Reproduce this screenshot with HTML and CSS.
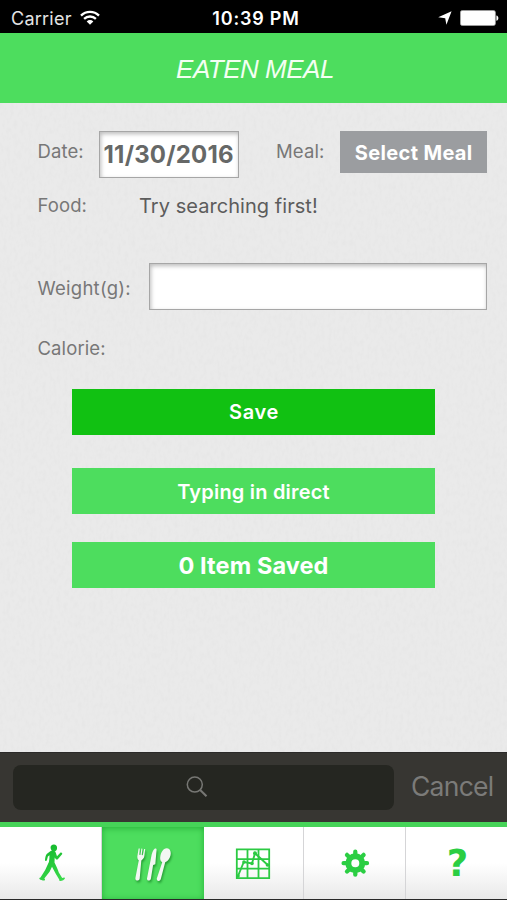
FILE: index.html
```
<!DOCTYPE html>
<html lang="en">
<head>
<meta charset="utf-8">
<title>Eaten Meal</title>
<link rel="stylesheet" href="styles.css">
</head>
<body>
<div class="app">
  <div class="status">
    <div class="carrier"><span>Carrier</span>
      <svg width="20" height="16" viewBox="0 0 20 16" fill="none" stroke="#fff" stroke-width="2.3"><path d="M1 5.6C6 .6 14 .6 19 5.6M4.1 8.9c3.3-3.2 8.5-3.2 11.8 0"/><path d="M6.7 11.4c1.9-1.8 4.7-1.8 6.6 0L10 14.7z" fill="#fff" stroke="none"/></svg>
    </div>
    <div class="clock">10:39 PM</div>
    <div class="power">
      <svg class="arrow" width="14" height="14" viewBox="0 0 14 14"><path d="M13.6.2 8.4 13.8 7.2 7.2.2 6.2z" fill="#fff"/></svg>
      <svg width="39" height="16" viewBox="0 0 39 16"><rect x=".4" y=".4" width="35" height="15.2" rx="2" fill="#fff" stroke="#aaa" stroke-width=".7"/><path d="M36.4 5.4c2.6.5 2.6 4.8 0 5.3z" fill="#fff"/></svg>
    </div>
  </div>
  <header class="title"><h1>EATEN MEAL</h1></header>
  <main class="form">
    <svg class="paper" width="507" height="649"><filter id="grain"><feTurbulence type="fractalNoise" baseFrequency=".28 .16" numOctaves="3" seed="4"/><feColorMatrix values="0 0 0 0 .5  0 0 0 0 .5  0 0 0 0 .5  .16 0 0 0 -.065"/></filter><rect width="507" height="649" filter="url(#grain)"/></svg>
    <div class="row row-date">
      <label class="label date-label">Date:</label>
      <div class="field date"><span>11/30/2016</span></div>
      <label class="label meal-label">Meal:</label>
      <button class="select"><span>Select Meal</span></button>
    </div>
    <div class="row row-food"><label class="label food-label">Food:</label><span class="hint">Try searching first!</span></div>
    <div class="row row-weight"><label class="label weight-label">Weight(g):</label><div class="field weight"></div></div>
    <div class="row row-calorie"><label class="label calorie-label">Calorie:</label></div>
    <div class="actions">
      <button class="btn save"><span>Save</span></button>
      <button class="btn direct"><span>Typing in direct</span></button>
      <button class="btn saved"><span>0 Item Saved</span></button>
    </div>
  </main>
  <div class="search">
    <div class="search-box">
      <svg width="22" height="22" viewBox="0 0 22 22" fill="none" stroke="#777774"><circle cx="8.8" cy="8.6" r="7.5" stroke-width="1.5"/><path d="m14.2 14 6.3 6.3" stroke-width="2.1"/></svg>
    </div>
    <span class="cancel">Cancel</span>
  </div>
  <nav class="tabs">
    <div class="tab">
      <svg width="60" height="55" viewBox="0 0 60 55"><defs><linearGradient id="green" gradientUnits="userSpaceOnUse" x1="22" y1="10" x2="42" y2="45"><stop offset="0" stop-color="#12b72b"/><stop offset="1" stop-color="#3ddc4d"/></linearGradient></defs><g fill="url(#green)"><path d="M29.3 15.3c1.6-1.2 4.6-.9 5.3 1l1.4 4 3.1-3.4c1.2-.8 2.6.2 2 1.3l-4.3 5c-.7.6-1.6.5-2.1-.2l-1-1.4-.2 4.8c1.6 3.3 3.3 6.7 4.3 10.2l3.4 5.3c1.4-.5 2.8-.8 2.8.4-.5 1.7-2.7 2.5-4.8 2.8-.8-.1-1-.8-1-1.6l-3.6-6-3.6-6.8-2.4 5-5.3 6.8c.8.7 1.1 1.6.2 1.9-1.8.1-4-.5-5-1.5-.5-.8.1-1.6 1-1.5l4.7-7.5 3.7-7.8c.4-2.6.7-4.8.6-6.9l-1.6 1.3-1 3.8c-.4 1.2-1.9 1-1.9-.3.1-2.2.6-4.4 1.7-6.1z"/><path d="M29.6 12c-.3-2 1.2-3.5 3.3-3.5 2 0 3.3 1.4 3.2 3.4-.1 2.1-1.2 3.5-3.2 3.5-1.9 0-3.1-1.5-3.3-3.4z"/></g></svg>
    </div>
    <div class="tab active">
      <svg width="60" height="55" viewBox="0 0 60 55"><g class="cutlery" fill="#f3f7f3"><path d="m15.6 12.5 1.2.1-.5 6.2 1.1.1 1-6.3 1 .1-.7 6.4 1.1.1 1.3-6.3 1.1.2-.9 7c-.3 2.5-1.9 3.7-3 4.3l-1.6 18c-.4 3-4.7 2.8-4.3-.3l3.4-17.8c-1.1-1-1.7-2.3-1.4-4.3z"/><path d="M28 22c.8-5 2-8 3.6-9.2.9-.6 2-.4 2 .8l-1.3 14.7-2.2.7-2.2 13.8c-.5 2.6-4.2 2.3-3.9-.4z"/><path d="M37.2 21.5c.5-5.5 3.4-9.6 6.9-9.2 3.6.4 4.6 4.8 2.8 9-1.1 2.7-2.8 4.3-4.7 5L37.8 43c-.6 2.8-4.4 2.5-4-.4l5.4-16.4c-1.4-.9-2.2-2.4-2-4.7z"/></g></svg>
    </div>
    <div class="tab">
      <svg width="60" height="55" viewBox="0 0 60 55" fill="none" stroke="#2cca43"><path d="M12.8 13.3h32.4v28.9H12.8zM23.5 14v28M34.5 14v28M13 23.2h32M13 32.6h32" stroke-width="1.8"/><path d="m13.8 40.5 6-14.5 8.2 1.5 3-10.3 13 12" stroke-width="1.9"/><g fill="#2cca43" stroke="none"><circle cx="14" cy="40" r="1.8"/><circle cx="20" cy="26" r="1.8"/><circle cx="28" cy="27.5" r="1.8"/><circle cx="31" cy="17.2" r="2"/><circle cx="43.5" cy="29" r="1.8"/></g></svg>
    </div>
    <div class="tab">
      <svg width="60" height="55" viewBox="0 0 60 55"><g transform="translate(30.3 27.2)" fill="none" stroke="#2bce43"><circle r="7" stroke-width="6"/><path d="M0-9.5v-2M0 9.5v2M-9.5 0h-2.2M9.5 0h2.2M-6.7-6.7l-1.6-1.6M6.7 6.7l1.6 1.6M-6.7 6.7l-1.6 1.6M6.7-6.7l1.6-1.6" stroke-width="4.3" stroke-linecap="round"/></g></svg>
    </div>
    <div class="tab help"><span>?</span></div>
  </nav>
</div>
</body>
</html>
```
FILE: styles.css
```
* { box-sizing: border-box; }
body { margin: 0; font-family: Inter, "Liberation Sans", sans-serif; }
.app { width: 507px; height: 900px; display: flex; flex-direction: column; overflow: hidden; }
.status { height: 33px; flex: none; background: #000; color: #fff; display: grid; grid-template-columns: 1fr auto 1fr; align-items: center; padding: 3px 8px 0 11px; font-size: 18px; }
.carrier { display: flex; gap: 8px; align-items: center; color: #e4e4e4; letter-spacing: .25px; }
.clock { font-weight: 600; font-size: 18px; letter-spacing: .8px; margin-right: -2px; }
.power { display: flex; justify-content: flex-end; gap: 8px; }
.arrow { margin-top: 1px; }
.title { height: 70px; flex: none; background: #4ddd5e; display: flex; align-items: center; justify-content: center; }
.title h1 { margin: 2px 0 0 3px; font: italic 400 26px "Liberation Sans", sans-serif; letter-spacing: -.5px; color: #f3fff2; }
.form { height: 649px; flex: none; position: relative; background: #eaeaea; padding: 28px 20px 0 38px; }
.paper { position: absolute; left: 0; top: 0; }
.row, .actions { position: relative; }
.row { display: flex; color: #777; white-space: nowrap; }
.label { font-size: 18.5px; line-height: 24px; margin-left: -.5px; letter-spacing: .1px; }
.row-date { height: 47px; }
.date-label { width: 61.5px; padding-top: 8px; }
.field { background: #fff; border: 1px solid #a6a6a6; box-shadow: inset 1px 2px 4px #bbb; }
.date { width: 140px; height: 47px; display: flex; align-items: center; justify-content: center; color: #666867; font-size: 24px; font-weight: 700; letter-spacing: .2px; }
.meal-label { width: 102.5px; padding: 8px 0 0 38px; }
button { border: 0; padding: 0; color: #fff; font-family: Inter, sans-serif; display: flex; align-items: center; justify-content: center; }
.select { width: 147px; height: 42px; background: #9b9da0; font-size: 20px; font-weight: 700; letter-spacing: .35px; padding-top: 2px; }
.row-food { height: 85px; padding-top: 15px; }
.food-label { width: 101.5px; }
.hint { font-size: 20px; line-height: 26px; color: #5c5c5c; letter-spacing: .05px; }
.row-weight { height: 47px; }
.weight-label { width: 111.5px; padding-top: 13px; letter-spacing: .25px; }
.weight { width: 338px; height: 47px; }
.row-calorie { height: 79px; padding-top: 26px; }
.actions { width: 363px; margin-left: 34px; }
.btn { width: 363px; height: 46px; background: #4ddd5e; font-size: 20px; font-weight: 600; letter-spacing: .2px; }
.save { background: #11c112; letter-spacing: .6px; padding-left: 1px; }
.direct { margin-top: 33px; padding-top: 1px; }
.saved { margin-top: 28px; font-size: 23.5px; font-weight: 700; letter-spacing: .1px; }
.search { height: 70px; flex: none; background: #373632; border-top: 1px solid #2b2a29; display: flex; padding: 12px 13px 0; }
.search-box { width: 381px; flex: none; height: 45px; border-radius: 8px; background: #252621; display: flex; align-items: center; justify-content: center; padding: 0 0 1px; }
.search-box svg { margin-left: -13px; }
.cancel { margin-left: 17px; font-size: 26.5px; line-height: 43px; letter-spacing: -.75px; color: #7b7b79; }
.tabs { height: 78px; flex: none; border-top: 5px solid #46d358; border-bottom: 1px solid #292929; display: grid; grid-template-columns: 102px 102px 100px 102px 101px; background: linear-gradient(#fff 50%, #e9e9e9); }
.tab { display: flex; justify-content: center; align-items: center; border-right: 1px solid #d5d5d7; }
.tab:last-child, .active { border-right: 0; }
.active { background: #4ddd5e; box-shadow: inset 0 1px 6px #25b038; }
.cutlery { filter: drop-shadow(1px 2px 1px #269c35); }
.help { font: 700 37px "DejaVu Sans", sans-serif; color: #2bce43; padding-left: 2px; }
```
